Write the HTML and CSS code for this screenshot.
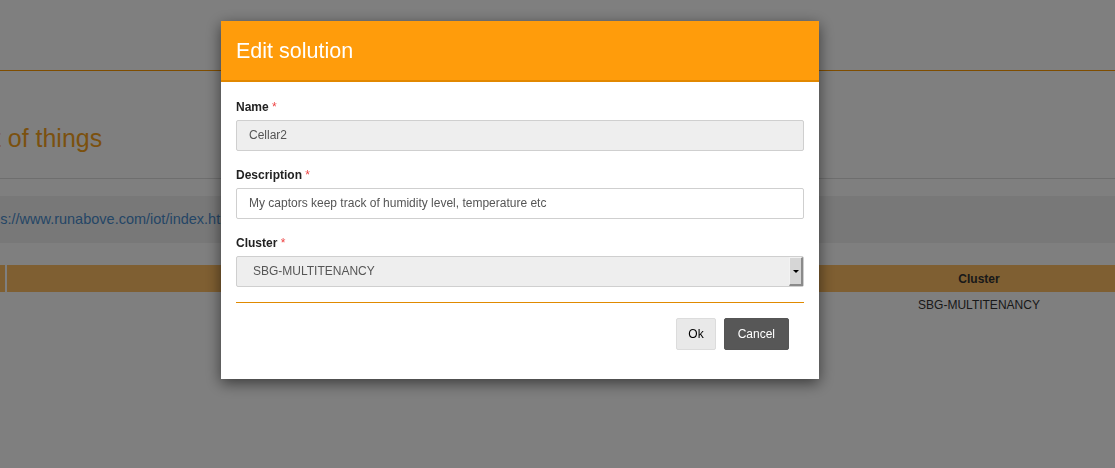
FILE: index.html
```html
<!DOCTYPE html>
<html lang="en">
<head>
<meta charset="utf-8">
<title>Edit solution</title>
<link rel="stylesheet" href="styles.css">
</head>
<body>
<div class="page">
  <header class="topbar"></header>
  <section class="title-block">
    <h1 class="page-title">Internet of things</h1>
  </section>
  <div class="url-well"><a class="url-link" href="#">https://www.runabove.com/iot/index.html</a></div>
  <table class="solutions">
    <colgroup>
      <col class="c1"><col class="c2"><col class="c3">
    </colgroup>
    <thead>
      <tr><th></th><th></th><th>Cluster</th></tr>
    </thead>
    <tbody>
      <tr><td></td><td></td><td>SBG-MULTITENANCY</td></tr>
    </tbody>
  </table>
</div>

<div class="overlay">
  <div class="modal">
    <div class="modal-header">
      <h2 class="modal-title">Edit solution</h2>
    </div>
    <div class="modal-body">
      <div class="field">
        <label class="label">Name <span class="req">*</span></label>
        <div class="input input-disabled">Cellar2</div>
      </div>
      <div class="field">
        <label class="label">Description <span class="req">*</span></label>
        <div class="input">My captors keep track of humidity level, temperature etc</div>
      </div>
      <div class="field">
        <label class="label">Cluster <span class="req">*</span></label>
        <div class="select">
          <span class="select-value">SBG-MULTITENANCY</span>
          <span class="select-btn"><span class="caret"></span></span>
        </div>
      </div>
      <div class="divider"></div>
      <div class="actions">
        <button class="btn btn-ok" type="button">Ok</button>
        <button class="btn btn-cancel" type="button">Cancel</button>
      </div>
    </div>
  </div>
</div>
</body>
</html>
```

FILE: styles.css
```css
html, body {
  margin: 0;
  padding: 0;
  height: 100%;
}
body {
  font-family: "Liberation Sans", Arial, sans-serif;
  font-size: 12px;
  line-height: 17px;
  color: #333;
  background: #fff;
  overflow: hidden;
}

/* ---------- background page ---------- */
.page {
  width: 1260px;
}
.topbar {
  height: 70px;
  border-bottom: 1px solid #ff9a00;
}
.title-block {
  padding: 52px 0 25px 0;
  border-bottom: 1px solid #dcdcdc;
}
.page-title {
  margin: 0 0 0 -84px;
  font-size: 25px;
  line-height: 30px;
  font-weight: normal;
  color: #f7a21d;
  white-space: nowrap;
}
.url-well {
  margin-top: 17px;
  height: 47px;
  line-height: 47px;
  background: #f1f1f1;
  font-size: 14.5px;
  white-space: nowrap;
  overflow: hidden;
}
.url-link {
  display: inline-block;
  margin-left: -24px;
  color: #4a8ccc;
  text-decoration: none;
}
.solutions {
  margin-top: 22px;
  width: 1257px;
  table-layout: fixed;
  border-collapse: collapse;
}
.solutions .c1 { width: 6px; }
.solutions .c2 { width: 694px; }
.solutions .c3 { width: 557px; }
.solutions th {
  height: 17px;
  padding: 6px 0 4px 0;
  background: #febe64;
  font-weight: bold;
  text-align: center;
  color: #333;
}
.solutions th + th,
.solutions td + td {
  border-left: 2px solid #fff;
}
.solutions td {
  padding: 5px 0 3px 0;
  height: 17px;
  text-align: center;
  color: #333;
}
.solutions td + td {
  border-left-color: transparent;
}
.solutions th:first-child,
.solutions td:first-child {
  padding: 0;
}

/* ---------- overlay + modal ---------- */
.overlay {
  position: fixed;
  inset: 0;
  background: rgba(0, 0, 0, 0.5);
  padding: 21px 0 0 221px;
}
.modal {
  width: 598px;
  background: #fff;
  box-shadow: 0 4px 14px rgba(0, 0, 0, 0.55);
}
.modal-header {
  height: 59px;
  background: #ff9c0b;
  border-bottom: 2px solid #e28800;
  padding: 0 15px;
  box-sizing: content-box;
}
.modal-title {
  margin: 0;
  padding-top: 16px;
  font-size: 21.5px;
  line-height: 29px;
  font-weight: normal;
  color: #fff;
}
.modal-body {
  padding: 17px 15px 29px 15px;
}
.field + .field {
  margin-top: 16px;
}
.label {
  display: block;
  font-weight: bold;
  color: #222;
  margin-bottom: 4px;
}
.req {
  color: #ee4444;
  font-weight: normal;
}
.input {
  height: 29px;
  line-height: 29px;
  border: 1px solid #cfcfcf;
  border-radius: 2px;
  padding: 0 12px;
  color: #555;
  background: #fff;
  white-space: nowrap;
}
.input-disabled {
  background: #eeeeee;
}
.select {
  display: flex;
  height: 29px;
  border: 1px solid #cfcfcf;
  border-radius: 2px;
  background: #eeeeee;
  color: #555;
}
.select-value {
  flex: 1;
  line-height: 29px;
  padding-left: 16px;
}
.select-btn {
  width: 11px;
  display: flex;
  align-items: center;
  justify-content: center;
  background: #d6d6d6;
  border-top: 1px solid #f2f2f2;
  border-left: 1px solid #f2f2f2;
  border-right: 2px solid #8a8a8a;
  border-bottom: 2px solid #8a8a8a;
}
.caret {
  width: 0;
  height: 0;
  border-left: 3px solid transparent;
  border-right: 3px solid transparent;
  border-top: 3px solid #000;
}
.divider {
  margin-top: 15px;
  height: 1px;
  background: #e08a00;
}
.actions {
  display: flex;
  justify-content: flex-end;
  gap: 8px;
  padding: 15px 15px 0 0;
}
.btn {
  height: 32px;
  margin: 0;
  padding: 0 12px;
  font-family: "Liberation Sans", Arial, sans-serif;
  font-size: 12px;
  border-radius: 2px;
  cursor: pointer;
}
.btn-ok {
  padding: 0 11px;
  background: #e9e9e9;
  border: 1px solid #dcdcdc;
  color: #000;
}
.btn-cancel {
  padding: 0 13px;
  background: #575757;
  border: 1px solid #555;
  color: #fff;
}
```
